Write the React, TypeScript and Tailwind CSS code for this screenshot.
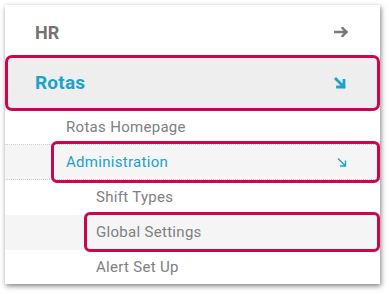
import React from "react";

function ArrowRight() {
  return (
    <svg width="14" height="10" viewBox="0 0 14 10" fill="none">
      <path d="M1 5H12.5M8.5 1L12.5 5L8.5 9" stroke="#777" strokeWidth="2.4" strokeLinecap="square" strokeLinejoin="miter" />
    </svg>
  );
}

function ArrowDownRight({ bold }: { bold?: boolean }) {
  return bold ? (
    <svg width="12" height="12" viewBox="0 0 12 12" fill="none">
      <path d="M2 2L10 10M10 3.5V10H3.5" stroke="#1aa3cf" strokeWidth="2.8" strokeLinecap="square" />
    </svg>
  ) : (
    <svg width="10" height="11" viewBox="0 0 10 11" fill="none">
      <path d="M1 1.5L8.5 9M8.5 3.5V9H3" stroke="#1aa3cf" strokeWidth="1.4" />
    </svg>
  );
}

export default function App() {
  return (
    <div className="bg-white w-[389px] h-[294px] p-[5px]" style={{ fontFamily: "Roboto, 'Liberation Sans', sans-serif" }}>
      <div className="w-[375px] h-[279px] bg-white shadow-[1px_2px_5px_rgba(0,0,0,0.5)] flex flex-col">
        <div className="h-[50px] pt-[4px] pl-[30px] pr-[32px] flex items-center justify-between">
          <span className="text-[18px] font-bold text-[#737373]">HR</span>
          <ArrowRight />
        </div>
        <div className="h-[56px] border-[3px] border-[#c9064f] rounded-[7px] bg-[#eeeeee] pl-[27px] pr-[31px] flex items-center justify-between">
          <span className="text-[19px] font-bold text-[#1aa3cf] tracking-[0.2px]">Rotas</span>
          <ArrowDownRight bold />
        </div>
        <div className="h-[33px] pl-[61px] flex items-center">
          <span className="text-[15px] text-[#808080] tracking-[0.3px]">Rotas Homepage</span>
        </div>
        <div className="relative h-[36px] bg-[#f5f5f5] border-y border-dotted border-[#cfcfcf] pl-[61px] pr-[33px] flex items-center justify-between">
          <span className="text-[15px] text-[#1aa3cf] tracking-[0.3px]">Administration</span>
          <ArrowDownRight />
          <div className="absolute z-10 left-[46px] right-0 top-[-4px] bottom-[-4px] border-[3px] border-[#c9064f] rounded-[6px]" />
        </div>
        <div className="h-[35px] pl-[91px] flex items-center">
          <span className="text-[15px] text-[#808080] tracking-[0.3px]">Shift Types</span>
        </div>
        <div className="relative h-[35px] bg-[#f5f5f5] pl-[91px] flex items-center">
          <span className="text-[15px] text-[#808080] tracking-[0.3px]">Global Settings</span>
          <div className="absolute z-10 left-[79px] right-0 top-[-3px] bottom-[-2px] border-[3px] border-[#c9064f] rounded-[6px]" />
        </div>
        <div className="h-[34px] pl-[91px] flex items-center">
          <span className="text-[15px] text-[#808080] tracking-[0.3px]">Alert Set Up</span>
        </div>
      </div>
    </div>
  );
}
